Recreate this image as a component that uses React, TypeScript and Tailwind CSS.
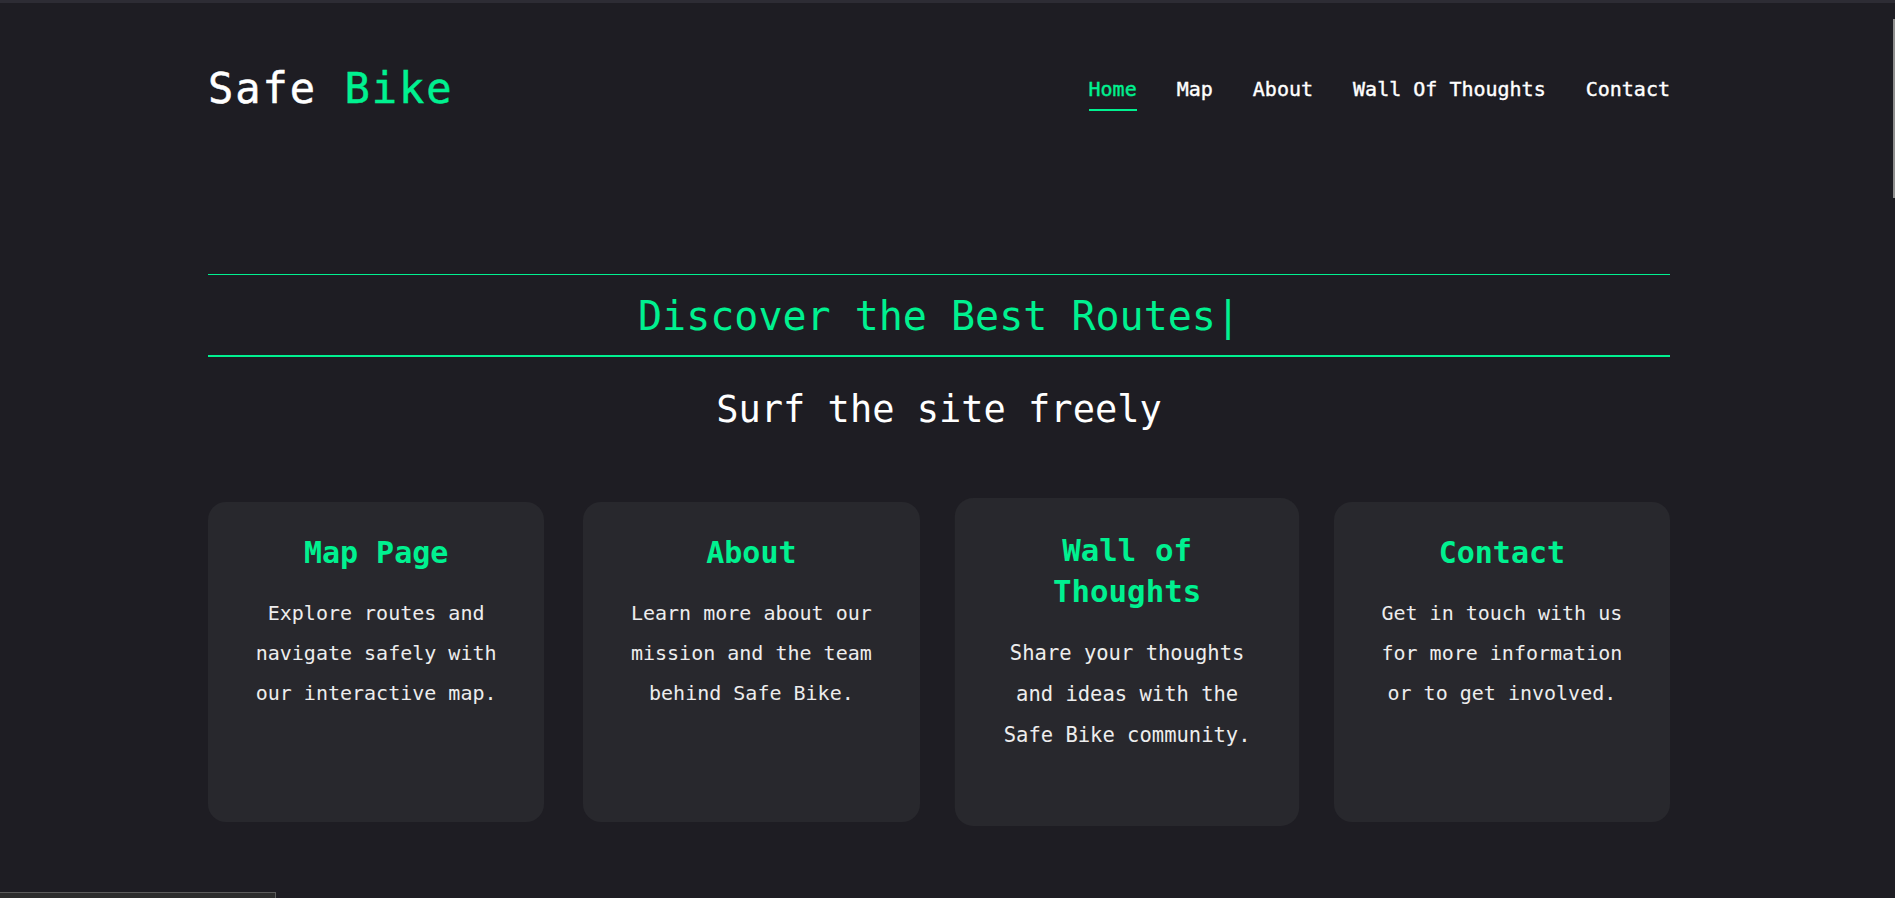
import React from "react";

const cards = [
  {
    title: "Map Page",
    text: "Explore routes and navigate safely with our interactive map.",
    active: false,
  },
  {
    title: "About",
    text: "Learn more about our mission and the team behind Safe Bike.",
    active: false,
  },
  {
    title: "Wall of Thoughts",
    text: "Share your thoughts and ideas with the Safe Bike community.",
    active: true,
  },
  {
    title: "Contact",
    text: "Get in touch with us for more information or to get involved.",
    active: false,
  },
];

const navItems = ["Home", "Map", "About", "Wall Of Thoughts", "Contact"];

export default function App() {
  return (
    <div className="relative h-[898px] w-full overflow-hidden bg-[#1e1d23] font-['DejaVu_Sans_Mono',monospace] text-white">
      <div className="h-[3px] w-full bg-[#2d2c34]" />
      <div className="flex">
        <div className="flex-1">
          <div className="mx-auto w-[1462px]">
            <header className="mt-[36px] flex h-[100px] items-center justify-between">
              <div className="text-[42px] leading-none tracking-[2px] [-webkit-text-stroke:0.5px_currentColor]">
                <span className="text-white">Safe </span>
                <span className="text-[#00f190]">Bike</span>
              </div>
              <nav className="flex items-center gap-10">
                {navItems.map((item, i) => (
                  <a
                    key={item}
                    className={
                      i === 0
                        ? "relative text-[20px] leading-7 font-medium text-[#00f190] [-webkit-text-stroke:0.4px_currentColor]"
                        : "relative text-[20px] leading-7 font-medium text-white [-webkit-text-stroke:0.4px_currentColor]"
                    }
                  >
                    {item}
                    {i === 0 && (
                      <span className="absolute left-0 right-0 -bottom-[8px] h-[2px] bg-[#00f190]" />
                    )}
                  </a>
                ))}
              </nav>
            </header>

            <section className="mt-[135px]">
              <div className="border-t border-b-2 border-[#00f190] pt-[17px] pb-[15px] text-center">
                <h1 className="text-[40px] leading-[48px] font-normal text-[#00f190]">
                  Discover the Best Routes|
                </h1>
              </div>
              <p className="mt-[31px] text-center text-[37px] leading-[44px] text-white">
                Surf the site freely
              </p>
            </section>

            <section className="mt-[70px] grid grid-cols-4 gap-[39px]">
              {cards.map((c) => (
                <div
                  key={c.title}
                  className={
                    c.active
                      ? "h-[320px] scale-[1.025] rounded-[18px] bg-[#28282d] px-8 pt-[31px] text-center"
                      : "h-[320px] rounded-[18px] bg-[#28282d] px-8 pt-[31px] text-center"
                  }
                >
                  <h2 className="text-[30px] leading-[40px] font-bold text-[#00f190]">
                    {c.title}
                  </h2>
                  <p className="mt-5 text-[20px] leading-[40px] text-[#ededed]">
                    {c.text}
                  </p>
                </div>
              ))}
            </section>
          </div>
        </div>
        <div className="w-[17px] shrink-0" />
      </div>

      <div className="absolute right-0 top-[19px] h-[179px] w-[2px] bg-[#8e8e8e]" />
      <div className="absolute bottom-0 left-0 h-[6px] w-[276px] border-t border-r border-[#5c5c5c] bg-[#2d2d2d]" />
    </div>
  );
}
